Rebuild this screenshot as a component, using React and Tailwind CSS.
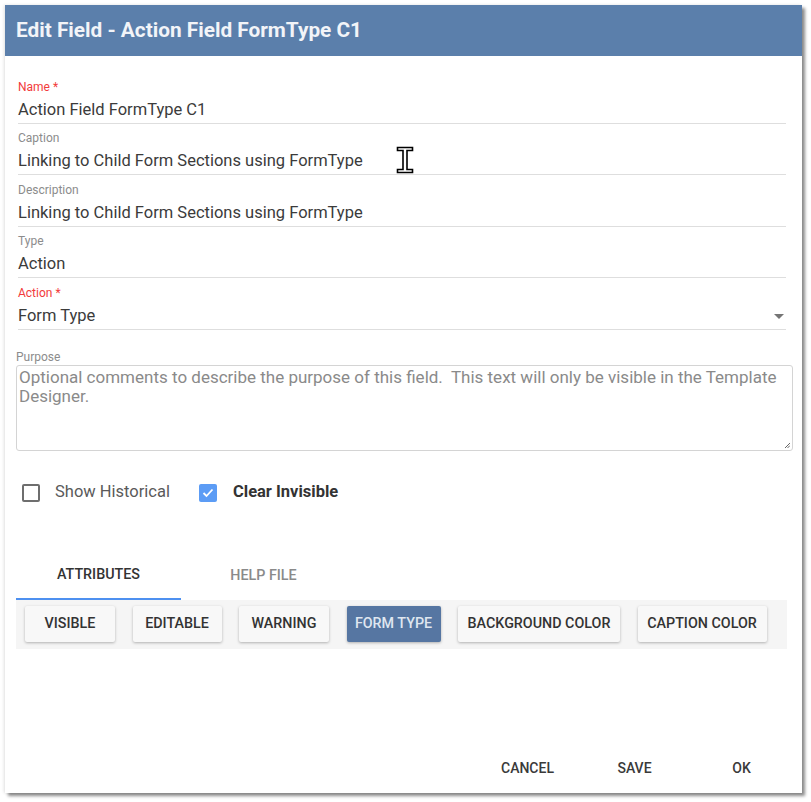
import React from "react";

function Field({ label, value, required, arrow }) {
  return (
    <div className="relative ml-[2px] mr-[7px] border-b border-[#dedede] pb-[3px]">
      <div className={"text-[12px] leading-[14px] " + (required ? "text-[#f23b3b]" : "text-[#8c8c8c]")}>
        {label}
        {required ? <span> *</span> : null}
      </div>
      <div className="mt-[6px] text-[16.5px] leading-[20px] text-[#3b3b3b]">{value}</div>
      {arrow ? (
        <svg className="absolute right-[2px] bottom-[10px]" width="10" height="5" viewBox="0 0 10 5">
          <path d="M0 0 L10 0 L5 5 Z" fill="#757575" />
        </svg>
      ) : null}
    </div>
  );
}

function AttrButton({ children, active, w }) {
  return (
    <div
      className={
        "flex h-[36px] items-center justify-center rounded-[2px] text-[14.3px] font-medium shadow-[0_1px_3px_rgba(0,0,0,0.28)] " +
        (active ? "bg-[#5676a2] text-[#dfe6f0]" : "bg-[#f8f8f8] text-[#333333]") +
        " " +
        w
      }
    >
      {children}
    </div>
  );
}

export default function App() {
  return (
    <div
      className="relative h-[802px] w-[811px] bg-white pt-[5px] pl-[5px]"
      style={{ fontFamily: "Roboto, 'Noto Sans', 'Liberation Sans', sans-serif" }}
    >
      <div className="flex h-[788px] w-[797px] flex-col bg-white shadow-[3px_3px_3px_rgba(0,0,0,0.45),-1px_0_3px_rgba(0,0,0,0.12)]">
        <div className="flex h-[51px] items-center bg-[#5b7fab] pl-[11px]">
          <span className="text-[20.8px] font-bold text-[#f2f4f8]">Edit Field - Action Field FormType C1</span>
        </div>

        <div className="flex flex-col pl-[11px] pr-[9px] pt-[24px]">
          <div className="flex flex-col gap-[7.4px]">
            <Field label="Name" required value="Action Field FormType C1" />
            <Field label="Caption" value="Linking to Child Form Sections using FormType" />
            <Field label="Description" value="Linking to Child Form Sections using FormType" />
            <Field label="Type" value="Action" />
            <Field label="Action" required value="Form Type" arrow />
          </div>

          <div className="mt-[20px] text-[12px] leading-[14px] text-[#8c8c8c]">Purpose</div>
          <div className="relative mt-[1px] h-[86px] rounded-[3px] border border-[#d4d4d4] px-[2px] pt-[2px] text-[17px] leading-[19px] text-[#8a8a8a]">
            Optional comments to describe the purpose of this field.&nbsp; This text will only be visible in the Template Designer.
            <svg className="absolute right-[2px] bottom-[2px]" width="6" height="6" viewBox="0 0 6 6">
              <path d="M1 6 L6 1 M3.5 6 L6 3.5" stroke="#666" strokeWidth="1" />
            </svg>
          </div>

          <div className="mt-[32px] flex h-[20px] items-center pl-[6px]">
            <div className="h-[18px] w-[18px] rounded-[2px] border-2 border-[#6e6e6e]" />
            <span className="ml-[15px] text-[16.5px] text-[#5a5a5a]">Show Historical</span>
            <div className="ml-[29px] flex h-[18px] w-[18px] items-center justify-center rounded-[2px] bg-[#5c9cf5]">
              <svg width="12" height="10" viewBox="0 0 12 10">
                <path d="M1.5 5 L4.5 8 L10.5 1.5" stroke="white" strokeWidth="1.8" fill="none" />
              </svg>
            </div>
            <span className="ml-[16px] text-[16.5px] font-bold text-[#333333]">Clear Invisible</span>
          </div>

          <div className="mt-[49px] flex h-[48px] pr-[6px]">
            <div className="flex w-[165px] items-center justify-center border-b-2 border-[#4d90f0] text-[14.3px] font-medium text-[#333333]">
              ATTRIBUTES
            </div>
            <div className="flex w-[165px] items-center justify-center text-[14.3px] font-medium text-[#8a8a8a]">
              HELP FILE
            </div>
          </div>
          <div className="mr-[6px] flex h-[49px] items-start gap-[17.5px] bg-[#f5f5f5] pl-[9px] pt-[6px]">
            <AttrButton w="w-[90px]">VISIBLE</AttrButton>
            <AttrButton w="w-[89px]">EDITABLE</AttrButton>
            <AttrButton w="w-[90px]">WARNING</AttrButton>
            <AttrButton w="w-[94px]" active>FORM TYPE</AttrButton>
            <AttrButton w="w-[162px]">BACKGROUND COLOR</AttrButton>
            <AttrButton w="w-[129px]">CAPTION COLOR</AttrButton>
          </div>
        </div>

        <div className="mt-auto flex justify-end pb-[7px] pr-[7px]">
          {["CANCEL", "SAVE", "OK"].map((t) => (
            <div key={t} className="flex h-[36px] w-[107px] items-center justify-center text-[14px] font-medium text-[#3a3a3a]">
              {t}
            </div>
          ))}
        </div>
      </div>

      <svg className="absolute left-[396px] top-[146px]" width="18" height="28" viewBox="0 0 18 28">
        <path
          d="M1.5 1.5 H16.5 V4.5 H11 V23.5 H16.5 V26.5 H1.5 V23.5 H7 V4.5 H1.5 Z"
          fill="white"
          stroke="black"
          strokeWidth="1.6"
        />
      </svg>
    </div>
  );
}
